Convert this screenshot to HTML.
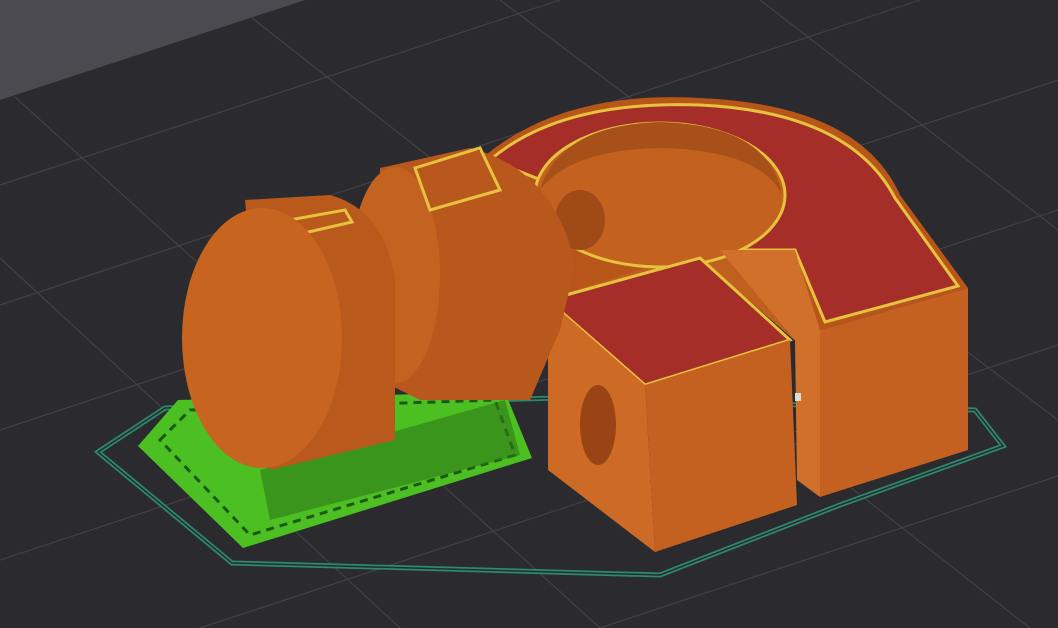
<!DOCTYPE html>
<html><head><meta charset="utf-8"><style>html,body{margin:0;padding:0;background:#2a2a2f;overflow:hidden}svg{display:block}</style></head>
<body>
<svg width="1058" height="628" viewBox="0 0 1058 628" xmlns="http://www.w3.org/2000/svg">
<rect width="1058" height="628" fill="#2a2a2f"/>
<polygon points="0,0 305,0 0,100" fill="#4a4a50"/>
<g stroke="#414147" stroke-width="1.2" fill="none">
<line x1="15" y1="97" x2="600" y2="628"/>
<line x1="252" y1="18" x2="1058" y2="650"/>
<line x1="0" y1="258" x2="400" y2="628"/>
<line x1="500" y1="0" x2="1058" y2="420"/>
<line x1="760" y1="0" x2="1058" y2="230"/>
<line x1="0" y1="185" x2="560" y2="0"/>
<line x1="0" y1="305" x2="920" y2="0"/>
<line x1="0" y1="430" x2="1058" y2="80"/>
<line x1="0" y1="560" x2="1058" y2="210"/>
<line x1="200" y1="628" x2="1058" y2="345"/>
<line x1="600" y1="628" x2="1058" y2="476"/>
</g>
<polygon points="98,452 165,408 560,398 975,410 1003,446 840,505 660,575 232,563" fill="none" stroke="#2a8a6a" stroke-width="5"/>
<polygon points="98,452 165,408 560,398 975,410 1003,446 840,505 660,575 232,563" fill="none" stroke="#2a2a2f" stroke-width="1.5"/>
<polygon points="138,446 178,400 505,392 532,458 243,548" fill="#4cbf22"/>
<polygon points="160,440 190,410 495,400 515,455 250,535" fill="none" stroke="#1c5a12" stroke-width="3" stroke-dasharray="8 6"/>
<polygon points="260,470 505,400 520,455 270,520" fill="#2f7a1a" opacity="0.6"/>
<!-- body fill behind ring -->
<polygon points="520,200 790,230 800,345 700,258 548,300 540,260" fill="#c0601f"/>
<!-- U shape -->
<path d="M480,160 Q560,90 700,98 Q860,105 900,195 L968,288 L820,330 L790,255 Q730,250 735,240 L560,295 Z" fill="#b8561a"/>
<path d="M490,160 Q560,100 700,105 Q850,112 895,198 L958,286 L825,322 L795,250 L720,250 Z" fill="#a52f28" stroke="#e6c23f" stroke-width="3"/>
<ellipse cx="660" cy="195" rx="125" ry="72" fill="#c3621f" stroke="#e6c23f" stroke-width="3"/>
<path d="M540,190 Q560,125 660,122 Q770,125 782,195 Q760,150 660,148 Q570,150 540,190 Z" fill="#a8501a"/>
<ellipse cx="580" cy="220" rx="25" ry="30" fill="#a04a18"/>
<!-- right box -->
<polygon points="820,330 968,288 968,450 820,497" fill="#c46020"/>
<polygon points="720,250 795,250 820,330 820,497 797,480 795,340" fill="#d0702a"/>
<!-- front box -->
<polygon points="548,300 700,258 790,340 645,385" fill="#a52f28" stroke="#e6c23f" stroke-width="3"/>
<polygon points="645,385 790,340 797,505 655,552" fill="#c46020"/>
<polygon points="548,300 645,385 655,552 548,470" fill="#cd6a25"/>
<ellipse cx="598" cy="425" rx="18" ry="40" fill="#9a4315"/>
<!-- middle cylinder -->
<path d="M380,168 L470,148 Q555,170 575,265 L560,330 L530,400 L420,400 L380,380 Z" fill="#b8581c"/>
<ellipse cx="395" cy="275" rx="45" ry="108" fill="#c4621f"/>
<polygon points="415,168 480,148 500,190 430,210" fill="none" stroke="#e6c23f" stroke-width="3"/>
<!-- big cylinder -->
<path d="M245,200 L330,195 Q385,210 395,280 L395,440 L270,470 Z" fill="#b9591c"/>
<polygon points="245,228 345,210 352,222 252,245" fill="none" stroke="#e6c23f" stroke-width="3"/>
<ellipse cx="262" cy="338" rx="80" ry="130" fill="#c66420"/>
<rect x="795" y="393" width="6" height="8" fill="#ddd"/>
</svg>
</body></html>
